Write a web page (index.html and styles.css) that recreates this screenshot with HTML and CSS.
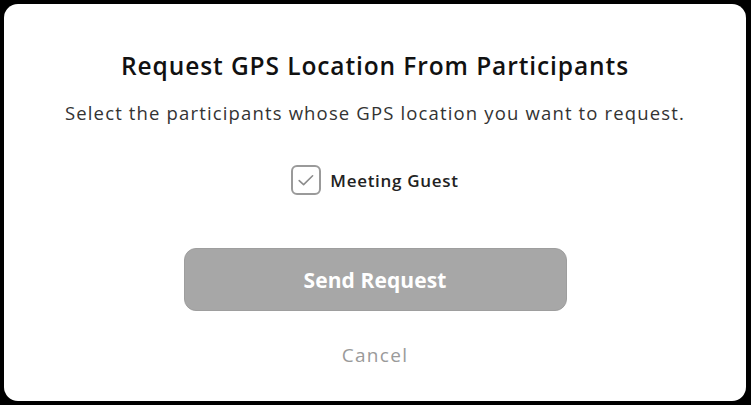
FILE: index.html
```html
<!DOCTYPE html>
<html>
<head>
<meta charset="utf-8">
<link rel="stylesheet" href="styles.css">
</head>
<body>
<div class="dialog">
  <h1 class="title">Request GPS Location From Participants</h1>
  <p class="subtitle">Select the participants whose GPS location you want to request.</p>
  <label class="option">
    <span class="box">
      <svg width="18" height="18" viewBox="0 0 18 18"><path d="M2.2 9.6 L6.6 13.6 L15.6 4.8" fill="none" stroke="#8c8c8c" stroke-width="1.6" stroke-linecap="round" stroke-linejoin="round"/></svg>
    </span>
    <span class="option-label">Meeting Guest</span>
  </label>
  <button class="send">Send Request</button>
  <div class="cancel">Cancel</div>
</div>
</body>
</html>
```
FILE: styles.css
```css
html, body {
  margin: 0;
  padding: 0;
  background: #000;
}
body {
  width: 751px;
  height: 405px;
  font-family: "Open Sans", "Noto Sans", sans-serif;
}
.dialog {
  margin: 4px 5px 0 4px;
  height: 397px;
  background: #fff;
  border-radius: 14px;
  display: flex;
  flex-direction: column;
  align-items: center;
  padding-top: 47px;
  box-sizing: border-box;
}
.title {
  margin: 0;
  font-size: 24.5px;
  line-height: 30px;
  font-weight: 600;
  letter-spacing: 0.9px;
  color: #111;
}
.subtitle {
  margin: 21px 0 0;
  font-size: 18.5px;
  line-height: 22px;
  letter-spacing: 1.15px;
  color: #333;
}
.option {
  margin-top: 41px;
  display: flex;
  align-items: center;
  gap: 9px;
  height: 30px;
}
.box {
  width: 26px;
  height: 26px;
  border: 2px solid #9a9a9a;
  border-radius: 6px;
  display: flex;
  align-items: center;
  justify-content: center;
}
.option-label {
  font-size: 17px;
  font-weight: 600;
  letter-spacing: 0.7px;
  color: #222;
}
.send {
  margin-top: 53px;
  width: 383px;
  height: 63px;
  border: 1px solid #9e9e9e;
  border-radius: 12px;
  background: #a7a7a7;
  color: #fff;
  font-family: inherit;
  font-size: 21px;
  font-weight: 700;
  letter-spacing: 0.1px;
}
.cancel {
  margin-top: 33px;
  font-size: 19px;
  line-height: 22px;
  letter-spacing: 1.3px;
  color: #9a9a9a;
}
```
